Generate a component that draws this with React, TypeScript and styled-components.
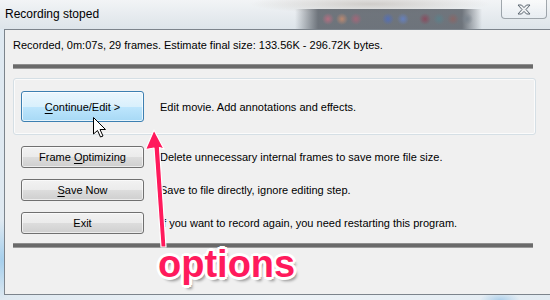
import React from "react";
import styled, { createGlobalStyle } from "styled-components";

const Global = createGlobalStyle`
  html, body { margin: 0; padding: 0; width: 550px; height: 300px; overflow: hidden; background: #e6eef5; }
  #root { width: 550px; height: 300px; }
`;

const Desktop = styled.div`
  position: relative;
  width: 550px;
  height: 300px;
  overflow: hidden;
  display: flex;
  flex-direction: column;
  font-family: "Liberation Sans", Arial, sans-serif;
  background:
    radial-gradient(ellipse 14px 40px at 2px 260px, rgba(150, 200, 235, 0.8), transparent),
    radial-gradient(ellipse 20px 8px at 500px 300px, rgba(150, 195, 230, 0.7), transparent),
    linear-gradient(to right, #dfe9f1, #eef3f7 50%, #e2ebf2);
`;

const TitleBar = styled.div`
  position: relative;
  height: 29px;
  flex: none;
  display: flex;
  align-items: flex-start;
  justify-content: space-between;
  background:
    radial-gradient(circle 6px at 328px 19px, rgba(190, 110, 130, 0.85), transparent),
    radial-gradient(circle 6px at 342px 19px, rgba(200, 140, 110, 0.85), transparent),
    radial-gradient(circle 6px at 356px 19px, rgba(170, 100, 120, 0.85), transparent),
    radial-gradient(circle 6px at 388px 19px, rgba(80, 110, 190, 0.85), transparent),
    radial-gradient(circle 6px at 403px 19px, rgba(100, 130, 200, 0.85), transparent),
    radial-gradient(circle 6px at 425px 19px, rgba(140, 70, 90, 0.85), transparent),
    radial-gradient(circle 6px at 439px 19px, rgba(90, 130, 140, 0.85), transparent),
    radial-gradient(circle 6px at 453px 19px, rgba(140, 100, 100, 0.85), transparent),
    radial-gradient(circle 6px at 467px 19px, rgba(120, 130, 140, 0.85), transparent),
    linear-gradient(to right, transparent 295px, rgba(90, 96, 104, 0.85) 318px, rgba(90, 96, 104, 0.85) 462px, transparent 482px) 0 9px / 550px 20px no-repeat,
    radial-gradient(ellipse 120px 10px at 370px 4px, rgba(170, 160, 150, 0.45), transparent),
    linear-gradient(to bottom, #f2f4f6, #e5eaee 60%, #dde4ea);
`;

const Title = styled.div`
  margin: 7px 0 0 5px;
  font-size: 12px;
  line-height: 15px;
  color: #000;
`;

const CloseButton = styled.div`
  width: 44px;
  height: 18px;
  margin-right: 3px;
  border: 1px solid rgba(90, 100, 110, 0.55);
  border-top: none;
  border-radius: 0 0 4px 4px;
  background: linear-gradient(to bottom, rgba(255, 255, 255, 0.55), rgba(235, 240, 245, 0.5));
  display: flex;
  align-items: center;
  justify-content: center;
`;

const Client = styled.div`
  flex: none;
  width: 541px;
  height: 256px;
  margin-left: 4px;
  border: 1px solid #7c848c;
  background: #f0f0f0;
  display: flex;
  flex-direction: column;
  padding: 8px 0 0 8px;
  box-sizing: content-box;
`;

const Status = styled.div`
  font-size: 11px;
  line-height: 13px;
  color: #000;
  margin-top: 1px;
`;

const Bar = styled.div<{ $top: number }>`
  width: 520px;
  height: 3px;
  background: #6a6a6a;
  border-top: 1px solid #8e8e8e;
  border-bottom: 1px solid #9a9a9a;
  margin-top: ${(p) => p.$top}px;
`;

const Group = styled.div`
  width: 514px;
  height: 55px;
  margin-top: 9px;
  border: 1px solid #d5dfe5;
  border-radius: 3px;
  box-shadow: inset 0 0 0 1px #fbfbfb;
  display: flex;
  align-items: center;
  padding-left: 7px;
`;

const Row = styled.div<{ $top: number }>`
  display: flex;
  align-items: center;
  margin-top: ${(p) => p.$top}px;
  padding-left: 8px;
`;

const Button = styled.div<{ $hot?: boolean; $h?: number }>`
  width: 121px;
  height: ${(p) => (p.$h ?? 22) - 2}px;
  border: 1px solid ${(p) => (p.$hot ? "#3c7fb1" : "#707070")};
  border-radius: 3px;
  box-shadow: inset 0 0 0 1px ${(p) => (p.$hot ? "rgba(255,255,255,0.7)" : "rgba(255,255,255,0.6)")};
  background: ${(p) =>
    p.$hot
      ? "linear-gradient(to bottom, #eaf6fd 0%, #d9f0fc 50%, #bee6fd 50%, #a7d9f5 100%)"
      : "linear-gradient(to bottom, #f2f2f2 0%, #ebebeb 50%, #dddddd 50%, #cfcfcf 100%)"};
  display: flex;
  align-items: center;
  justify-content: center;
  font-size: 11px;
  color: #000;
  flex: none;
  u { text-decoration: underline; text-underline-offset: 2px; }
`;

const Desc = styled.div`
  margin-left: 16px;
  font-size: 11px;
  color: #000;
`;

const Overlay = styled.svg`
  position: absolute;
  left: 0;
  top: 0;
  pointer-events: none;
`;

const Options = styled.div`
  position: absolute;
  left: 158px;
  top: 245px;
  font-family: "Liberation Sans", Arial, sans-serif;
  font-weight: bold;
  font-size: 38px;
  line-height: 1;
  color: #ff1a5c;
  text-shadow:
    2px 0 #fff, -2px 0 #fff, 0 2px #fff, 0 -2px #fff,
    2px 2px #fff, -2px -2px #fff, 2px -2px #fff, -2px 2px #fff,
    3px 0 #fff, -3px 0 #fff, 0 3px #fff, 0 -3px #fff,
    3px 4px 3px rgba(0, 0, 0, 0.4);
`;

export default function App() {
  return (
    <>
      <Global />
      <Desktop>
        <TitleBar>
          <Title>Recording stoped</Title>
          <CloseButton>
            <svg width="14" height="11" viewBox="0 0 14 11">
              <path
                d="M1 1 H4.5 L7 3.6 L9.5 1 H13 L9 5.5 L13 10 H9.5 L7 7.4 L4.5 10 H1 L5 5.5 Z"
                fill="#eef0f2"
                stroke="#5c6670"
                strokeWidth="1"
                strokeLinejoin="round"
              />
            </svg>
          </CloseButton>
        </TitleBar>
        <Client>
          <Status>Recorded, 0m:07s, 29 frames. Estimate final size: 133.56K - 296.72K bytes.</Status>
          <Bar $top={12} />
          <Group>
            <Button $hot $h={31}>
              <span><u>C</u>ontinue/Edit &gt;</span>
            </Button>
            <Desc>Edit movie. Add annotations and effects.</Desc>
          </Group>
          <Row $top={11}>
            <Button>
              <span>Frame <u>O</u>ptimizing</span>
            </Button>
            <Desc>Delete unnecessary internal frames to save more file size.</Desc>
          </Row>
          <Row $top={11}>
            <Button>
              <span><u>S</u>ave Now</span>
            </Button>
            <Desc>Save to file directly, ignore editing step.</Desc>
          </Row>
          <Row $top={11}>
            <Button>
              <span>Exit</span>
            </Button>
            <Desc>If you want to record again, you need restarting this program.</Desc>
          </Row>
          <Bar $top={9} />
        </Client>
        <Overlay width="550" height="300" viewBox="0 0 550 300">
          <path
            d="M154 130 L164 149 L159.5 147.5 L166 247 L161 247 L154 148 L145.5 149.5 Z"
            fill="#ff1a5c"
            stroke="#ffffff"
            strokeWidth="1.2"
            strokeLinejoin="round"
          />
          <path
            d="M93.5 117.5 L93.5 134 L97.5 130.5 L100.5 137 L103 136 L100 129.5 L105.5 129.5 Z"
            fill="#ffffff"
            stroke="#000"
            strokeWidth="1"
            strokeLinejoin="round"
          />
        </Overlay>
        <Options>options</Options>
      </Desktop>
    </>
  );
}
